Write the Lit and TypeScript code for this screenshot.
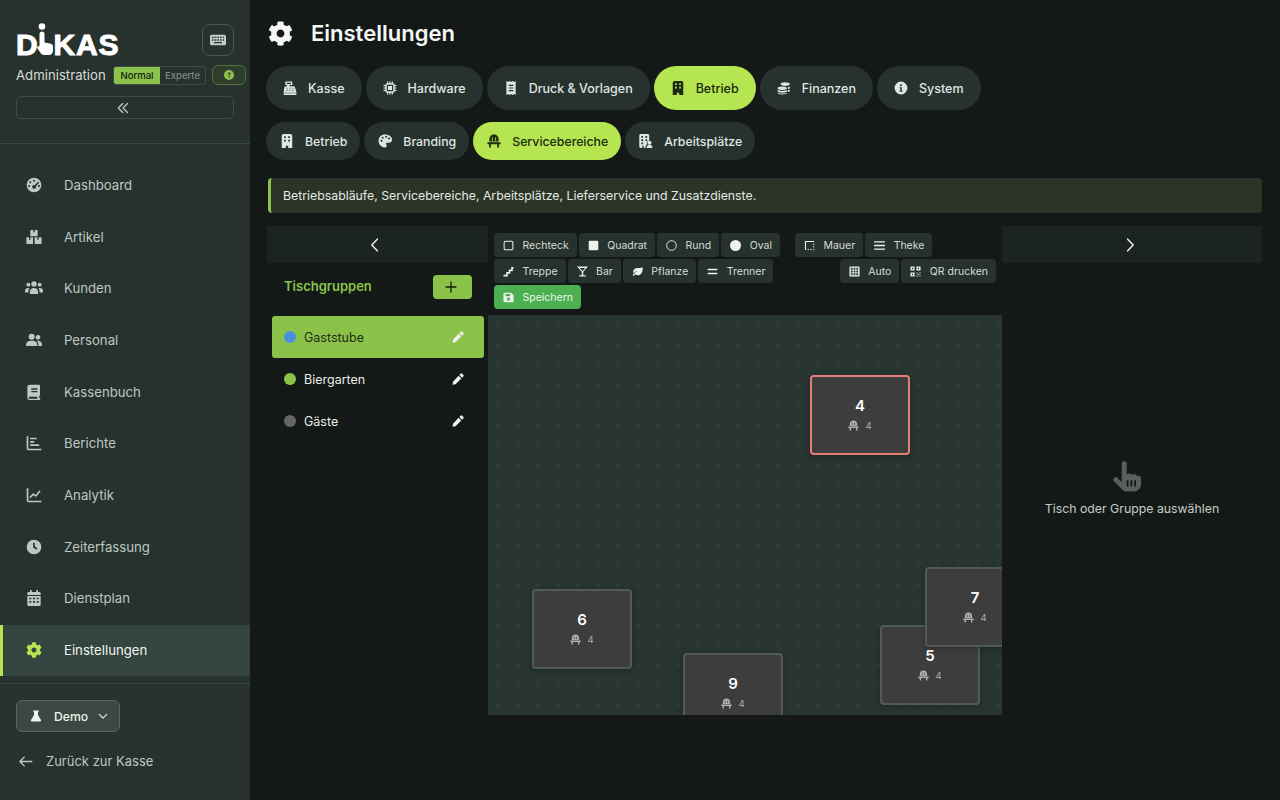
import { LitElement, html, css, svg } from "lit";
import { customElement } from "lit/decorators.js";

const GEAR = svg`<path transform="scale(.0469)" d="M487.4 315.7l-42.6-24.6c4.3-23.2 4.3-47 0-70.2l42.6-24.6c4.9-2.8 7.1-8.6 5.5-14-11.1-35.6-30-67.8-54.7-94.6-3.8-4.1-10-5.1-14.8-2.3L380.8 110c-17.9-15.4-38.5-27.3-60.8-35.1V25.8c0-5.6-3.9-10.5-9.4-11.7-36.7-8.2-74.3-7.8-109.2 0-5.5 1.2-9.4 6.1-9.4 11.7V75c-22.2 7.9-42.8 19.8-60.8 35.1L88.7 85.5c-4.9-2.8-11-1.9-14.8 2.3-24.7 26.7-43.6 58.9-54.7 94.6-1.7 5.4.6 11.2 5.5 14L67.3 221c-4.3 23.2-4.3 47 0 70.2l-42.6 24.6c-4.9 2.8-7.1 8.6-5.5 14 11.1 35.6 30 67.8 54.7 94.6 3.8 4.1 10 5.1 14.8 2.3l42.6-24.6c17.9 15.4 38.5 27.3 60.8 35.1v49.2c0 5.6 3.9 10.5 9.4 11.7 36.7 8.2 74.3 7.8 109.2 0 5.5-1.2 9.4-6.1 9.4-11.7v-49.2c22.2-7.9 42.8-19.8 60.8-35.1l42.6 24.6c4.9 2.8 11 1.9 14.8-2.3 24.7-26.7 43.6-58.9 54.7-94.6 1.5-5.5-.7-11.3-5.6-14.1zM256 336c-44.1 0-80-35.9-80-80s35.9-80 80-80 80 35.9 80 80-35.9 80-80 80z"/>`;

const CHAIR = svg`<path fill-rule="evenodd" d="M12 1C7 1 4 4.500 4 9.500V13h16V9.500C20 4.500 17 1 12 1zM8.400 11.500V5.500h1.500v6zm5.700 0V5.500h1.500v6z"/><path d="M.8 14h22.400v3.500H20.500V23h-3v-5.500h-11V23h-3v-5.500H.8z"/>`;

const ICONS: Record<string, unknown> = {
  gear: GEAR,
  chair: CHAIR,
  keyboard: svg`<path fill-rule="evenodd" d="M2.500 4h19A2.500 2.500 0 0 1 24 6.500v11a2.500 2.500 0 0 1-2.500 2.500h-19A2.500 2.500 0 0 1 0 17.500v-11A2.500 2.500 0 0 1 2.500 4zM3 7v2h2.500V7zm4 0v2h2.500V7zm4 0v2h2.500V7zm4 0v2h2.500V7zm4 0v2h2V7zM3 11v2h2.500v-2zm4 0v2h2.500v-2zm4 0v2h2.500v-2zm4 0v2h2.500v-2zm4 0v2h2v-2zM6 15v1.800h12V15z"/>`,
  register: svg`<path fill-rule="evenodd" d="M5 1h10a1 1 0 0 1 1 1v4a1 1 0 0 1-1 1h-4v2h7.500c1 0 1.700.6 1.900 1.500L23 19v1H1v-1l1.600-8.500C2.800 9.600 3.500 9 4.500 9H7V7H5a1 1 0 0 1-1-1V2a1 1 0 0 1 1-1zm1.500 2v2h7V3zM6 11.500v1.500h2v-1.500zm5 0v1.500h2v-1.500zm5 0v1.500h2v-1.500zM6 15v1.500h2V15zm5 0v1.500h2V15zm5 0v1.500h2V15z"/><path d="M1 21h22v1.500a1.500 1.500 0 0 1-1.500 1.500h-19A1.500 1.500 0 0 1 1 22.500z"/>`,
  chip: svg`<path fill-rule="evenodd" d="M7 1h2v3h2V1h2v3h2V1h2v3a3 3 0 0 1 3 3h3v2h-3v2h3v2h-3v2h3v2h-3a3 3 0 0 1-3 3v3h-2v-3h-2v3h-2v-3H9v3H7v-3a3 3 0 0 1-3-3H1v-2h3v-2H1v-2h3V9H1V7h3a3 3 0 0 1 3-3zM6.500 6.500v11h11v-11zM8.500 8.500h7v7h-7z"/>`,
  receipt: svg`<path fill-rule="evenodd" d="M4 0l2.700 1.800L9.300 0 12 1.800 14.700 0l2.600 1.800L20 0v24l-2.700-1.800-2.600 1.800L12 22.200 9.300 24l-2.600-1.800L4 24zm4 6.500V8.500h8V6.500zm0 4.500v2h8v-2zm0 4.500v2h8v-2z"/>`,
  building: svg`<path fill-rule="evenodd" d="M6 0h12a3 3 0 0 1 3 3v21h-7v-4h-4v4H3V3a3 3 0 0 1 3-3zm1 4v3h3V4zm7 0v3h3V4zM7 10v3h3v-3zm7 0v3h3v-3z"/>`,
  coins: svg`<path d="M14 2c4.500 0 8 1.300 8 3.200S18.500 8.400 14 8.400 6 7.100 6 5.200 9.500 2 14 2z"/><path d="M9 9.500c4.400 0 8 1.300 8 3s-3.600 3-8 3-8-1.300-8-3 3.600-3 8-3zM1 15c1.500 1.300 4.500 2 8 2s6.500-.7 8-2v2c0 1.700-3.600 3-8 3s-8-1.300-8-3zM1 19.500c1.500 1.200 4.500 2 8 2s6.500-.8 8-2V20c0 1.700-3.600 3-8 3s-8-1.300-8-3z"/><path d="M18.500 10.800c2-.4 3.500-1.200 3.500-1.200v2.400c0 .8-1.300 1.500-3.200 1.900zM18.500 15.800c2-.4 3.500-1.200 3.500-1.200V17c0 .8-1.300 1.500-3.500 1.900z"/>`,
  info: svg`<path fill-rule="evenodd" d="M12 1a11 11 0 1 1 0 22 11 11 0 0 1 0-22zm0 4.500a1.700 1.700 0 1 0 0 3.400 1.700 1.700 0 0 0 0-3.400zM9.500 10.500v2h1.200v4H9.500v2h5v-2h-1.200v-6z"/>`,
  palette: svg`<path fill-rule="evenodd" d="M12 1C5.500 1 1 5.600 1 12s5 11 11 11c2 0 3-1.200 3-2.700 0-.8-.4-1.300-.7-1.800-.3-.5-.6-1-.6-1.600 0-1.200 1-2 2.300-2h3.300c2.700 0 4.700-1.900 4.700-4.900C24 4.600 18.500 1 12 1zM6 13.500a1.800 1.800 0 1 1 0-3.600 1.800 1.800 0 0 1 0 3.600zm2-5.200a1.800 1.800 0 1 1 0-3.600 1.800 1.800 0 0 1 0 3.600zm6-1.800a1.800 1.800 0 1 1 0-3.600 1.800 1.800 0 0 1 0 3.600zm4.800 3a1.800 1.800 0 1 1 0-3.600 1.800 1.800 0 0 1 0 3.600z"/>`,
  buildingUser: svg`<path fill-rule="evenodd" d="M3 0h12a2.500 2.500 0 0 1 2.500 2.500V11a4.500 4.500 0 0 0-3.700 6.600A6 6 0 0 0 11 22.500V24H8v-4H5.500v4H3a2.500 2.500 0 0 1-2.500-2.500v-19A2.500 2.500 0 0 1 3 0zm1 3.500v3h3v-3zm7 0v3h3v-3zM4 9v3h3V9zm7 0v3h3V9zM4 14.500v3h3v-3z"/><circle cx="18" cy="15" r="3.500"/><path d="M13 23c0-3 2-4.500 5-4.500s5 1.500 5 4.500c0 .6-.4 1-1 1h-8c-.6 0-1-.4-1-1z"/>`,
  gauge: svg`<path fill-rule="evenodd" d="M12 1a11 11 0 1 1 0 22 11 11 0 0 1 0-22zm0 3a1.500 1.500 0 1 0 0 3 1.500 1.500 0 0 0 0-3zM6.500 6.500a1.500 1.500 0 1 0 0 3 1.500 1.500 0 0 0 0-3zM4.500 12a1.500 1.500 0 1 0 0 3 1.500 1.500 0 0 0 0-3zm15 0a1.500 1.500 0 1 0 0 3 1.500 1.500 0 0 0 0-3zm-1.300-5L13 12.200a2.800 2.800 0 1 0 1.800 1.800l5-5.500z"/>`,
  boxes: svg`<path d="M7.500 1.500H11v3.500h2V1.500h3.500a1 1 0 0 1 1 1V10a1 1 0 0 1-1 1h-9a1 1 0 0 1-1-1V2.500a1 1 0 0 1 1-1zM1 12.500h3.500V16h2v-3.500h4v10H2a1.500 1.500 0 0 1-1.500-1.500v-8a.5.500 0 0 1 .5-.5zM13 12.500h4V16h2v-3.500h4a.5.500 0 0 1 .5.5v8a1.500 1.500 0 0 1-1.500 1.500h-9z"/>`,
  users: svg`<circle cx="12" cy="6.500" r="3.600"/><circle cx="4.500" cy="7.500" r="2.600"/><circle cx="19.500" cy="7.500" r="2.600"/><path d="M6.500 20v-3c0-3 2-5 5.500-5s5.500 2 5.500 5v3zM0 18v-2c0-2.500 1.500-4 4-4 1 0 1.500.2 2 .5-1.300 1.300-1.500 3-1.500 5.500zM24 18v-2c0-2.500-1.500-4-4-4-1 0-1.500.2-2 .5 1.300 1.300 1.500 3 1.500 5.500z"/>`,
  userGroup: svg`<circle cx="8.500" cy="7" r="4.500"/><circle cx="18" cy="8" r="3.500"/><path d="M0 21v-1.500C0 15.500 3 13 6.500 13h4c3.500 0 6.500 2.500 6.500 6.500V21zM18.500 21V19c0-2.500-1-4.500-2.600-5.800.6-.2 1.300-.2 2-.2 3.500 0 6.100 2.300 6.100 5.600V21z"/>`,
  book: svg`<path fill-rule="evenodd" d="M5.500 1H19a2 2 0 0 1 2 2v14a2 2 0 0 1-1.300 1.900V21h.3a1.500 1.500 0 0 1 0 3H5.500A3.500 3.500 0 0 1 2 20.500v-16A3.500 3.500 0 0 1 5.500 1zM8 6.500V8.500h9V6.500zm0 4v2h9v-2zM5.500 19a1.500 1.500 0 0 0 0 3h11.500v-3z"/>`,
  chartBar: svg`<path d="M1 2h2.500v17.500a1 1 0 0 0 1 1H23V23H4a3 3 0 0 1-3-3z"/><rect x="6" y="4" width="10" height="2.500" rx="1"/><rect x="6" y="9" width="6.500" height="2.500" rx="1"/><rect x="6" y="14" width="14" height="2.500" rx="1"/>`,
  chartLine: svg`<path d="M1 2h2.500v17.500a1 1 0 0 0 1 1H23V23H4a3 3 0 0 1-3-3z"/><path d="M6.500 15.500l4.500-5 3.500 3 6-7" fill="none" stroke="currentColor" stroke-width="2.400" stroke-linecap="round" stroke-linejoin="round"/>`,
  clock: svg`<path fill-rule="evenodd" d="M12 1a11 11 0 1 1 0 22 11 11 0 0 1 0-22zm-1.300 4.500v7.200l5 3.300 1.400-2.100-3.900-2.500V5.500z"/>`,
  calendar: svg`<path fill-rule="evenodd" d="M6 0h2.500v3h7V0H18v3h2a2 2 0 0 1 2 2v2.500H2V5a2 2 0 0 1 2-2h2zM2 9h20v13a2 2 0 0 1-2 2H4a2 2 0 0 1-2-2zm3 2.500v2.500h3v-2.500zm5.500 0v2.500h3v-2.500zm5.500 0v2.500h3v-2.500zM5 16.500V19h3v-2.500zm5.500 0V19h3v-2.500zm5.500 0V19h3v-2.500z"/>`,
  flask: svg`<path d="M6.500 1h11v2.500H16v6.300l6 10.200c.7 1.500-.3 3-2 3H4c-1.700 0-2.700-1.500-2-3l6-10.200V3.500H6.500z"/>`,
  rect: svg`<rect x="2.500" y="2.500" width="19" height="19" rx="3" fill="none" stroke="currentColor" stroke-width="2.200"/>`,
  square: svg`<rect x="1.500" y="1.500" width="21" height="21" rx="2.500"/>`,
  circleO: svg`<circle cx="12" cy="12" r="10.500" fill="none" stroke="currentColor" stroke-width="2"/>`,
  circle: svg`<circle cx="12" cy="12" r="12"/>`,
  stairs: svg`<path d="M1 23v-4h6v-6h5.500V7.500H18V2h5v4h-1.500v5.500H16V17h-5.500v6z"/>`,
  martini: svg`<path d="M0 1h24L13.700 12.500V20H19v3H5v-3h5.300v-7.500zM6 4.500l6 6.500 6-6.500z" fill-rule="evenodd"/>`,
  leaf: svg`<path d="M23 2c1 7-.5 14-6 17-3.800 2-8 1-10-1-1.200 1-2.200 2.400-3 4l-2.500-1c2-4.800 5.800-8 11-10-4 .6-7.600 2.300-9.800 5C1.500 11 4 5.500 10 4.500c5-.8 10 .3 13-2.500z"/>`,
  equals: svg`<rect x="1" y="6" width="22" height="3.400" rx="1.500"/><rect x="1" y="14.600" width="22" height="3.400" rx="1.500"/>`,
  wall: svg`<path d="M2 2h20v2.500H4.500V22H2z"/><rect x="20" y="8" width="2.500" height="2.500"/><rect x="20" y="13.500" width="2.500" height="2.500"/><rect x="20" y="19.500" width="2.500" height="2.500"/><rect x="8" y="19.500" width="2.500" height="2.500"/><rect x="14" y="19.500" width="2.500" height="2.500"/>`,
  bars: svg`<rect x="0" y="2.500" width="24" height="3.200" rx="1"/><rect x="0" y="10.400" width="24" height="3.200" rx="1"/><rect x="0" y="18.300" width="24" height="3.200" rx="1"/>`,
  grid: svg`<path fill-rule="evenodd" d="M3 1h18a2 2 0 0 1 2 2v18a2 2 0 0 1-2 2H3a2 2 0 0 1-2-2V3a2 2 0 0 1 2-2zm1 3v4h4V4zm6 0v4h4V4zM16 4v4h4V4zM4 10v4h4v-4zm6 0v4h4v-4zm6 0v4h4v-4zM4 16v4h4v-4zm6 0v4h4v-4zm6 0v4h4v-4z"/>`,
  qr: svg`<path fill-rule="evenodd" d="M1 1h9v9H1zm3 3v3h3V4zM14 1h9v9h-9zm3 3v3h3V4zM1 14h9v9H1zm3 3v3h3v-3z"/><path d="M14 14h2.500v2.500H14zM20.500 14H23v2.500h-2.500zM17.200 17.200h2.600v2.600h-2.600zM14 20.500h2.500V23H14zM20.500 20.500H23V23h-2.500z"/>`,
  save: svg`<path fill-rule="evenodd" d="M4 1.500h13.500L23 7v13.500a2 2 0 0 1-2 2H4a3 3 0 0 1-3-3v-15a3 3 0 0 1 3-3zm1.500 3v5h10v-5zM12 12a3.500 3.500 0 1 0 0 7 3.500 3.500 0 0 0 0-7z"/>`,
  pen: svg`<path d="M17 1.500a2.400 2.400 0 0 1 3.400 0l2.100 2.100a2.400 2.400 0 0 1 0 3.400l-2.300 2.300-5.500-5.500zM13.200 5.300l5.500 5.500L7 22.500 1 23.500l1-6z"/>`,
  hand: svg`<path d="M8 1.800a2 2 0 0 1 4 0v8.600c.5-.6 1.200-.9 2-.9 1 0 1.800.5 2.200 1.200.4-.4 1-.7 1.700-.7 1.100 0 2 .7 2.300 1.600.3-.2.700-.3 1.100-.3 1.200 0 2.200 1 2.200 2.200V18c0 3.300-2.700 6-6 6h-5c-2 0-3.600-.8-4.800-2.300L1.600 15.600a2 2 0 0 1 3.100-2.500L8 16.500z" transform="translate(-1 0)"/><g fill="#141917"><rect x="11" y="15" width="1.400" height="5"/><rect x="14" y="15" width="1.400" height="5"/><rect x="17" y="15" width="1.400" height="5"/></g>`,
  question: svg`<circle cx="12" cy="12" r="12"/><path d="M8.700 9.200c.1-2 1.500-3.200 3.500-3.200 2.100 0 3.500 1.200 3.500 2.900 0 1.300-.7 2-1.700 2.700-.9.600-1.100 1-1.100 1.900h-2.300c0-1.500.4-2.200 1.500-3 .8-.6 1.200-.9 1.200-1.500s-.5-1-1.200-1c-.8 0-1.200.5-1.300 1.200zm2.600 6h2.500v2.500h-2.500z" fill="#26312d"/>`,
};

const stroke = (d: string, w = 2) =>
  svg`<path d=${d} fill="none" stroke="currentColor" stroke-width=${w} stroke-linecap="round" stroke-linejoin="round"/>`;
ICONS.dblLeft = stroke("M11.500 3l-9 9 9 9M21 3l-9 9 9 9", 2.500);
ICONS.left = stroke("M16 2l-9.500 10 9.500 10", 2.600);
ICONS.right = stroke("M8 2l9.500 10L8 22", 2.600);
ICONS.down = stroke("M3 8l9 9 9-9", 2.500);
ICONS.arrowLeft = stroke("M22 12H3M10 5l-7 7 7 7", 2.200);
ICONS.plus = stroke("M12 2v20M2 12h20", 2.600);

const icon = (name: string, cls = "") =>
  html`<svg class="ic ${cls}" viewBox="0 0 24 24" fill="currentColor" aria-hidden="true">${ICONS[name]}</svg>`;

const NAV = [
  ["gauge", "Dashboard"],
  ["boxes", "Artikel"],
  ["users", "Kunden"],
  ["userGroup", "Personal"],
  ["book", "Kassenbuch"],
  ["chartBar", "Berichte"],
  ["chartLine", "Analytik"],
  ["clock", "Zeiterfassung"],
  ["calendar", "Dienstplan"],
  ["gear", "Einstellungen"],
];
const TABS = [
  ["register", "Kasse"],
  ["chip", "Hardware"],
  ["receipt", "Druck & Vorlagen"],
  ["building", "Betrieb"],
  ["coins", "Finanzen"],
  ["info", "System"],
];
const SUB = [
  ["building", "Betrieb"],
  ["palette", "Branding"],
  ["chair", "Servicebereiche"],
  ["buildingUser", "Arbeitsplätze"],
];
const GROUPS = [
  { name: "Gaststube", color: "#4a90e2", on: true },
  { name: "Biergarten", color: "#8bc34a", on: false },
  { name: "Gäste", color: "#666666", on: false },
];
const TABLES = [
  { n: "4", x: 322, y: 60, sel: true },
  { n: "6", x: 44, y: 274, sel: false },
  { n: "9", x: 195, y: 338, sel: false },
  { n: "5", x: 392, y: 310, sel: false },
  { n: "7", x: 437, y: 252, sel: false },
];

@customElement("app-root")
export class AppRoot extends LitElement {
  static styles = css`
    :host {
      display: flex;
      width: 1280px;
      height: 800px;
      overflow: hidden;
      background: #141917;
      font-family: Inter, "Noto Sans", sans-serif;
      color: #e8eee9;
    }
    .ic { width: 16px; height: 16px; flex: none; display: block; }
    .side {
      width: 250px;
      flex: none;
      background: #27322e;
      display: flex;
      flex-direction: column;
      box-sizing: border-box;
    }
    .brand {
      height: 144px;
      box-sizing: border-box;
      border-bottom: 1px solid #3a4641;
      padding: 24px 4px 0 16px;
      display: flex;
      flex-direction: column;
    }
    .brand-top { display: flex; justify-content: space-between; align-items: flex-end; height: 32px; padding-right: 12px; }
    .logo {
      display: flex;
      align-items: flex-end;
      font-family: "Liberation Sans", sans-serif;
      font-weight: 700;
      font-size: 30px;
      line-height: 23px;
      color: #fff;
      letter-spacing: .8px;
      -webkit-text-stroke: 1px #fff;
    }
    .mark { width: 16px; height: 32px; flex: none; display: block; margin: 0 0 1px -1px; }
    .kbd {
      width: 32px; height: 32px; box-sizing: border-box;
      border: 1px solid #4a5651; border-radius: 8px;
      display: flex; align-items: center; justify-content: center; color: #c0cbc5;
    }
    .admin { display: flex; align-items: center; margin-top: 8px; height: 22px; }
    .admin span.t { font-size: 13.200px; color: #d5dcd7; width: 97px; flex: none; }
    .mode {
      display: flex; height: 19px; width: 93px; box-sizing: border-box;
      border: 1px solid #3f4b46; border-radius: 3px; overflow: hidden;
      font-size: 9.500px; font-weight: 500;
    }
    .mode b { font-weight: 500; background: #8bc34a; color: #15200e; width: 46px; display: flex; align-items: center; justify-content: center; }
    .mode i { font-style: normal; color: #7d8a84; flex: 1; display: flex; align-items: center; justify-content: center; }
    .help {
      margin-left: 6px; width: 34px; height: 20px; box-sizing: border-box;
      border: 1px solid #55703a; border-radius: 6px; background: #2f3d2c;
      display: flex; align-items: center; justify-content: center; color: #8bc34a;
    }
    .help .ic { width: 10px; height: 10px; }
    .collapse {
      margin-top: 10px; width: 218px; height: 23px; box-sizing: border-box;
      border: 1px solid #3f4b46; border-radius: 5px; color: #c4cec8;
      display: flex; align-items: center; justify-content: center; padding-right: 5px;
    }
    .collapse .ic { width: 12px; height: 12px; }
    nav { display: flex; flex-direction: column; padding-top: 15.500px; flex: none; height: 533px; box-sizing: border-box; }
    .nav {
      height: 51.700px; flex: none; display: flex; align-items: center;
      padding: 0 0 1px 26px; gap: 22px; font-size: 13.200px; color: #bcc8c1; box-sizing: border-box;
    }
    .nav .ic.wide { width: 18px; height: 18px; margin: 0 -1px; }
    .nav.on { background: #34443f; border-left: 3px solid #b5e550; padding-left: 23px; color: #f0f4f0; }
    .nav.on .ic { color: #b5e550; }
    .side-foot { border-top: 1px solid #3a4641; margin-top: 6px; padding: 16px; display: flex; flex-direction: column; align-items: flex-start; }
    .demo {
      width: 104px; height: 32px; box-sizing: border-box;
      border: 1px solid #58645f; border-radius: 6px; background: #3b4843;
      display: flex; align-items: center; padding-left: 13px; gap: 12px;
      font-size: 12.200px; font-weight: 500; color: #eef2ee;
    }
    .demo .ic { width: 12px; height: 12px; }
    .demo .ic.sm { width: 10px; height: 10px; margin-left: -2px; }
    .back { display: flex; align-items: center; gap: 13px; margin-top: 19px; font-size: 13px; color: #bcc8c1; height: 20px; margin-left: 2px; }
    .back .ic { width: 15px; height: 15px; }

    main { flex: 1; min-width: 0; display: flex; flex-direction: column; padding: 0 18px 0 16px; }
    .title { height: 66px; display: flex; align-items: center; gap: 18px; flex: none; padding-left: 2px; font-size: 22px; font-weight: 600; color: #f5f7f5; }
    .title .ic { width: 25px; height: 25px; }
    .tabs { display: flex; gap: 4px; flex: none; }
    .tab {
      height: 44px; padding: 0 17px; border-radius: 22px; background: #27322e;
      display: flex; align-items: center; gap: 11px; font-size: 12.500px; font-weight: 500; color: #dfe6e1; box-sizing: border-box;
    }
    .tab.on { background: #b5e550; color: #1c2a12; }
    .tab .ic { width: 14px; height: 14px; }
    .tabs.sub { margin-top: 12px; gap: 4px; }
    .tabs.sub .tab { height: 38px; border-radius: 19px; padding: 0 13px 0 14px; font-size: 12.300px; }
    .info {
      margin: 18px 0 0 2px; height: 35px; flex: none; box-sizing: border-box;
      border-left: 3px solid #8bc34a; border-radius: 4px;
      background: #2c3428; padding-left: 12px;
      display: flex; align-items: center; font-size: 12.300px; color: #e3e9e4;
    }
    .editor { margin-top: 13px; display: grid; grid-template-columns: 222px 514px 260px; flex: none; }
    .bar { height: 37px; background: #1c2421; display: flex; align-items: center; justify-content: center; color: #e8eee9; }
    .bar .ic { width: 14px; height: 14px; }
    .left .bar { margin-left: 1px; padding-right: 5px; }
    .right .bar { padding-right: 4px; }
    .lhead { display: flex; align-items: center; justify-content: space-between; height: 47px; padding: 0 16px 0 18px; font-size: 13px; font-weight: 600; color: #8bc34a; }
    .lhead span { padding-bottom: 2px; }
    .add { width: 39px; height: 24px; background: #8bc34a; border-radius: 4px; display: flex; align-items: center; justify-content: center; color: #15200e; padding-right: 3px; box-sizing: border-box; }
    .add .ic { width: 12px; height: 12px; }
    .list { margin: 6px 4px 0 6px; display: flex; flex-direction: column; }
    .group {
      height: 42px; display: flex; align-items: center; border-radius: 3px;
      padding: 0 20px 0 12px; font-size: 12.500px; color: #e8eee9;
    }
    .group.on { background: #8bc34a; color: #1e2d14; }
    .dot { width: 12px; height: 12px; border-radius: 50%; margin-right: 8px; }
    .group .ic { width: 12px; height: 12px; margin-left: auto; color: #eef2ee; }
    .toolbar { height: 89px; padding: 7px 6px 0; box-sizing: border-box; display: flex; flex-direction: column; gap: 2px; }
    .row { display: flex; gap: 2px; }
    .row.between { justify-content: space-between; }
    .row .sep { width: 11px; }
    .btn {
      height: 24px; box-sizing: border-box; padding: 0 8px 0 9px; border-radius: 4px;
      background: #27322e; display: flex; align-items: center; gap: 8.500px;
      font-size: 10.500px; color: #d3dbd6; white-space: nowrap;
    }
    .btn .ic { width: 11px; height: 11px; color: #eef2ee; }
    .btn.save { background: #4caf50; color: #eaf6ea; }
    .canvas {
      position: relative; height: 400px; overflow: hidden;
      background-color: #283530;
      background-image: radial-gradient(circle at 10px 10px, #36453f 1px, transparent 1.200px);
      background-size: 20px 20px;
    }
    .table {
      position: absolute; width: 100px; height: 80px; box-sizing: border-box;
      background: #3d3d3d; border: 2px solid #525a56; border-radius: 4px;
      display: flex; flex-direction: column; align-items: center; justify-content: center;
      box-shadow: 0 2px 6px rgba(0, 0, 0, .25);
    }
    .table.sel { border-color: #e57f73; }
    .table strong { font-size: 15px; font-weight: 600; color: #fff; line-height: 18px; margin-top: -2px; }
    .seats { display: flex; align-items: center; gap: 6px; font-size: 9.500px; color: #aeb2b0; margin-top: 5px; height: 12px; }
    .seats .ic { width: 11px; height: 11px; }
    .right { display: flex; flex-direction: column; }
    .empty { display: flex; flex-direction: column; align-items: center; padding-top: 197px; font-size: 12.300px; color: #c4cdc7; }
    .empty .ic { width: 30px; height: 33px; color: #5a5f5c; margin-bottom: 8px; margin-left: -8px; }
  `;

  private btn(i: string, t: string, extra = "") {
    return html`<div class="btn ${extra}">${icon(i)}<span>${t}</span></div>`;
  }

  render() {
    return html`
      <aside class="side">
        <div class="brand">
          <div class="brand-top">
            <div class="logo">
              <span>D</span>
              <svg class="mark" viewBox="0 0 16 32" fill="currentColor" aria-hidden="true">
                <circle cx="5" cy="3.500" r="3.300"></circle>
                <path d="M2.500 11a2.500 2.500 0 0 1 5 0v8.500l5.500 1c1.800.4 3 1.500 3 3.300V28c0 2.300-1.700 4-4 4H7c-1.500 0-2.500-.6-3.200-1.700L.5 25.500c-.8-1.500.4-3 2-2.500z"></path>
              </svg>
              <span>KAS</span>
            </div>
            <div class="kbd">${icon("keyboard")}</div>
          </div>
          <div class="admin">
            <span class="t">Administration</span>
            <div class="mode"><b>Normal</b><i>Experte</i></div>
            <div class="help">${icon("question")}</div>
          </div>
          <div class="collapse">${icon("dblLeft")}</div>
        </div>
        <nav>
          ${NAV.map(([i, t]) => html`<div class="nav ${t === "Einstellungen" ? "on" : ""}">${icon(i, i === "users" ? "wide" : "")}<span>${t}</span></div>`)}
        </nav>
        <div class="side-foot">
          <div class="demo">${icon("flask")}<span>Demo</span>${icon("down", "sm")}</div>
          <div class="back">${icon("arrowLeft")}<span>Zurück zur Kasse</span></div>
        </div>
      </aside>
      <main>
        <div class="title">${icon("gear")}<span>Einstellungen</span></div>
        <div class="tabs">
          ${TABS.map(([i, t]) => html`<div class="tab ${t === "Betrieb" ? "on" : ""}">${icon(i)}<span>${t}</span></div>`)}
        </div>
        <div class="tabs sub">
          ${SUB.map(([i, t]) => html`<div class="tab ${t === "Servicebereiche" ? "on" : ""}">${icon(i)}<span>${t}</span></div>`)}
        </div>
        <div class="info">Betriebsabläufe, Servicebereiche, Arbeitsplätze, Lieferservice und Zusatzdienste.</div>
        <div class="editor">
          <section class="left">
            <div class="bar">${icon("left")}</div>
            <div class="lhead"><span>Tischgruppen</span><div class="add">${icon("plus")}</div></div>
            <div class="list">
              ${GROUPS.map(
                (g) => html`<div class="group ${g.on ? "on" : ""}">
                  <span class="dot" style="background:${g.color}"></span><span>${g.name}</span>${icon("pen")}
                </div>`
              )}
            </div>
          </section>
          <section>
            <div class="toolbar">
              <div class="row">
                ${this.btn("rect", "Rechteck")}${this.btn("square", "Quadrat")}${this.btn("circleO", "Rund")}${this.btn("circle", "Oval")}
                <span class="sep"></span>
                ${this.btn("wall", "Mauer")}${this.btn("bars", "Theke")}
              </div>
              <div class="row between">
                <div class="row">${this.btn("stairs", "Treppe")}${this.btn("martini", "Bar")}${this.btn("leaf", "Pflanze")}${this.btn("equals", "Trenner")}</div>
                <div class="row">${this.btn("grid", "Auto")}${this.btn("qr", "QR drucken")}</div>
              </div>
              <div class="row">${this.btn("save", "Speichern", "save")}</div>
            </div>
            <div class="canvas">
              ${TABLES.map(
                (t) => html`<div class="table ${t.sel ? "sel" : ""}" style="left:${t.x}px;top:${t.y}px">
                  <strong>${t.n}</strong>
                  <div class="seats">${icon("chair")}<span>4</span></div>
                </div>`
              )}
            </div>
          </section>
          <section class="right">
            <div class="bar">${icon("right")}</div>
            <div class="empty">${icon("hand")}<span>Tisch oder Gruppe auswählen</span></div>
          </section>
        </div>
      </main>
    `;
  }
}
